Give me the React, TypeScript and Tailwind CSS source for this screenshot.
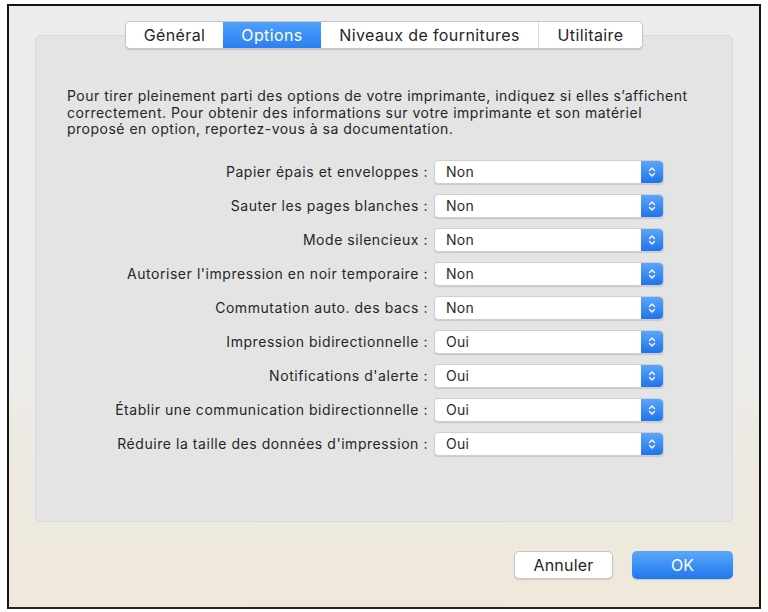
import React from 'react';

const tabs = [
  { label: 'Général', w: 'w-[97px]' },
  { label: 'Options', w: 'w-[98px]', active: true },
  { label: 'Niveaux de fournitures', w: 'w-[217px]' },
  { label: 'Utilitaire', w: 'w-[104px]' },
];

const rows = [
  ['Papier épais et enveloppes :', 'Non'],
  ['Sauter les pages blanches :', 'Non'],
  ['Mode silencieux :', 'Non'],
  ["Autoriser l'impression en noir temporaire :", 'Non'],
  ['Commutation auto. des bacs :', 'Non'],
  ['Impression bidirectionnelle :', 'Oui'],
  ["Notifications d'alerte :", 'Oui'],
  ['Établir une communication bidirectionnelle :', 'Oui'],
  ["Réduire la taille des données d'impression :", 'Oui'],
];

const Stepper = () => (
  <div className="w-[22px] h-full flex items-center justify-center rounded-r-[4px] bg-gradient-to-b from-[#5aa6fb] to-[#1f72ea]">
    <svg width="8" height="12" viewBox="0 0 8 12" fill="none" stroke="white" strokeWidth="1.4" strokeLinecap="round" strokeLinejoin="round">
      <polyline points="1.5,4.5 4,2 6.5,4.5" />
      <polyline points="1.5,7.5 4,10 6.5,7.5" />
    </svg>
  </div>
);

const Select = ({ value }: { value: string }) => (
  <div className="w-[230px] h-[24px] flex items-stretch rounded-[4px] bg-white border border-[#cfcfcf] shadow-[0_1px_1px_rgba(0,0,0,0.12)]">
    <div className="flex-1 flex items-center pl-[11px] text-[14px] tracking-[0.3px] text-[#2a2a2a]">{value}</div>
    <Stepper />
  </div>
);

export default function App() {
  return (
    <div
      className="w-[768px] h-[612px] bg-white pl-[7px] pt-[4px]"
      style={{ fontFamily: 'Inter, "Noto Sans", sans-serif' }}
    >
      <div className="w-[754px] h-[605px] border-2 border-[#141414] border-b-[#2a2418] bg-gradient-to-b from-[#ececec] via-[#ececec] to-[#efe8da] flex flex-col px-[26px] pt-[15px]">
        <div className="flex justify-center relative z-10 -mb-[14px]">
          <div className="flex h-[28px] rounded-[5px] bg-white border border-[#c6c6c6] shadow-[0_1px_1px_rgba(0,0,0,0.15)] overflow-hidden">
            {tabs.map((t, i) => (
              <div
                key={t.label}
                className={
                  t.w +
                  ' flex items-center justify-center text-[16px] tracking-[0.4px] ' +
                  (t.active
                    ? 'bg-gradient-to-b from-[#4f9ffa] to-[#2a7ff2] text-white'
                    : 'text-[#262626]') +
                  (i > 0 && !t.active && !tabs[i - 1].active ? ' border-l border-[#dcdcdc]' : '')
                }
              >
                {t.label}
              </div>
            ))}
          </div>
        </div>

        <div className="h-[487px] rounded-[5px] bg-[#e4e4e4] border border-[#dadada] pt-[52px] px-[31px]">
          <p className="text-[14px] tracking-[0.5px] leading-[16.5px] text-[#262626]">
            Pour tirer pleinement parti des options de votre imprimante, indiquez si elles s’affichent correctement.
            Pour obtenir des informations sur votre imprimante et son matériel proposé en option, reportez-vous à sa
            documentation.
          </p>
          <div className="mt-[22px] grid grid-cols-[361px_230px] gap-x-[6px] gap-y-[10px]">
            {rows.map(([label, value]) => (
              <React.Fragment key={label}>
                <div className="h-[24px] flex items-center justify-end text-[14px] tracking-[0.55px] text-[#262626] whitespace-nowrap">
                  {label}
                </div>
                <Select value={value} />
              </React.Fragment>
            ))}
          </div>
        </div>

        <div className="flex justify-end gap-[19px] mt-[29px]">
          <button className="w-[99px] h-[28px] rounded-[5px] bg-white border border-[#c4c4c4] shadow-[0_1px_1px_rgba(0,0,0,0.12)] text-[16px] tracking-[0.2px] text-[#262626]">
            Annuler
          </button>
          <button className="w-[101px] h-[28px] rounded-[5px] bg-gradient-to-b from-[#5aa8fc] to-[#1f76ee] text-[16px] text-white shadow-[0_1px_1px_rgba(0,0,0,0.15)]">
            OK
          </button>
        </div>
      </div>
    </div>
  );
}
